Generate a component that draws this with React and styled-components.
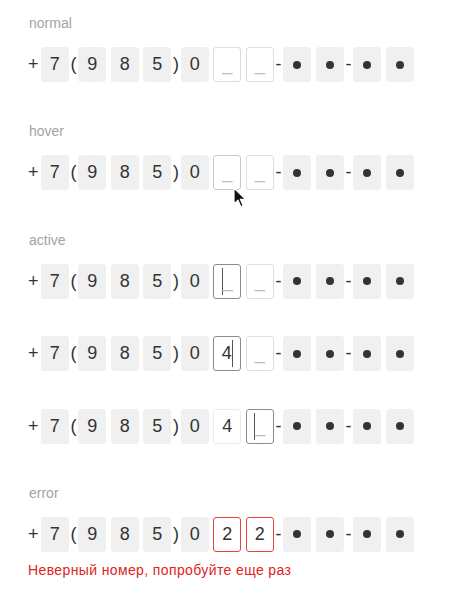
import React from "react";
import styled, { createGlobalStyle, css } from "styled-components";

const Global = createGlobalStyle`
  html, body { margin: 0; padding: 0; background: #fff; }
  body { font-family: "Liberation Sans", Arial, sans-serif; }
`;

const Page = styled.div`
  padding: 13px 0 0 28px;
  width: 464px;
  height: 603px;
  box-sizing: border-box;
`;

const Section = styled.section`
  margin-bottom: 39.4px;
`;

const Label = styled.div`
  font-size: 14px;
  line-height: 20px;
  color: #a3a3a3;
  margin-bottom: 14px;
  padding-left: 1px;
`;

const Rows = styled.div`
  display: flex;
  flex-direction: column;
  gap: 37.4px;
`;

const Row = styled.div`
  display: flex;
  align-items: center;
  height: 35px;
  font-size: 18px;
  color: #333;
`;

const Sep = styled.span`
  display: inline-flex;
  justify-content: center;
  width: ${(p) => p.$w || 5}px;
  line-height: 35px;
  color: #333;
`;

const slotStyles = {
  fixed: css`
    background: #f0f0f0;
    border-color: #f0f0f0;
  `,
  empty: css`
    background: #fff;
    border-color: #dedede;
  `,
  filled: css`
    background: #fff;
    border-color: #ececec;
  `,
  hover: css`
    background: #fff;
    border-color: #c9c9c9;
  `,
  active: css`
    background: #fff;
    border-color: #8c8c8c;
  `,
  error: css`
    background: #fff;
    border-color: #e5453c;
  `,
};

const Box = styled.span`
  position: relative;
  box-sizing: border-box;
  width: 28px;
  height: 35px;
  margin: 0 2.25px;
  border: 1px solid transparent;
  border-radius: 3px;
  display: inline-flex;
  align-items: center;
  justify-content: center;
  line-height: 33px;
  ${(p) => slotStyles[p.$kind || "fixed"]}
`;

const Placeholder = styled.span`
  color: #bdbdbd;
`;

const Caret = styled.span`
  display: inline-block;
  width: 1px;
  height: 27px;
  background: #555;
  align-self: center;
`;

const Dot = styled.span`
  width: 8px;
  height: 8px;
  border-radius: 50%;
  background: #333;
`;

const Pointer = styled.svg`
  position: absolute;
  left: 19px;
  top: 31px;
  width: 14px;
  height: 22px;
  pointer-events: none;
`;

const ErrorText = styled.div`
  margin-top: 8px;
  font-size: 14px;
  line-height: 20px;
  letter-spacing: 0.38px;
  color: #e0231b;
`;

function Slot({ kind, value, caret, pointer }) {
  return (
    <Box $kind={kind}>
      {value ? (
        <>
          <span>{value}</span>
          {caret && <Caret />}
        </>
      ) : (
        <>
          {caret && <Caret />}
          <Placeholder>_</Placeholder>
        </>
      )}
      {pointer && (
        <Pointer viewBox="0 0 14 22">
          <path
            d="M1 1 L1 17 L5 13.2 L7.8 19.8 L10.2 18.8 L7.4 12.3 L12.6 12.3 Z"
            fill="#111"
            stroke="#fff"
            strokeWidth="1.2"
            strokeLinejoin="round"
          />
        </Pointer>
      )}
    </Box>
  );
}

function Phone({ a, b }) {
  return (
    <Row>
      <Sep $w={10.5}>+</Sep>
      <Box>7</Box>
      <Sep>(</Sep>
      <Box>9</Box>
      <Box>8</Box>
      <Box>5</Box>
      <Sep>)</Sep>
      <Box>0</Box>
      <Slot {...a} />
      <Slot {...b} />
      <Sep>-</Sep>
      <Box><Dot /></Box>
      <Box><Dot /></Box>
      <Sep>-</Sep>
      <Box><Dot /></Box>
      <Box><Dot /></Box>
    </Row>
  );
}

export default function App() {
  return (
    <>
      <Global />
      <Page>
        <Section>
          <Label>normal</Label>
          <Phone a={{ kind: "empty" }} b={{ kind: "empty" }} />
        </Section>
        <Section>
          <Label>hover</Label>
          <Phone a={{ kind: "hover", pointer: true }} b={{ kind: "empty" }} />
        </Section>
        <Section>
          <Label>active</Label>
          <Rows>
            <Phone a={{ kind: "active", caret: true }} b={{ kind: "empty" }} />
            <Phone a={{ kind: "active", value: "4", caret: true }} b={{ kind: "empty" }} />
            <Phone a={{ kind: "filled", value: "4" }} b={{ kind: "active", caret: true }} />
          </Rows>
        </Section>
        <Section>
          <Label>error</Label>
          <Phone a={{ kind: "error", value: "2" }} b={{ kind: "error", value: "2" }} />
          <ErrorText>Неверный номер, попробуйте еще раз</ErrorText>
        </Section>
      </Page>
    </>
  );
}
